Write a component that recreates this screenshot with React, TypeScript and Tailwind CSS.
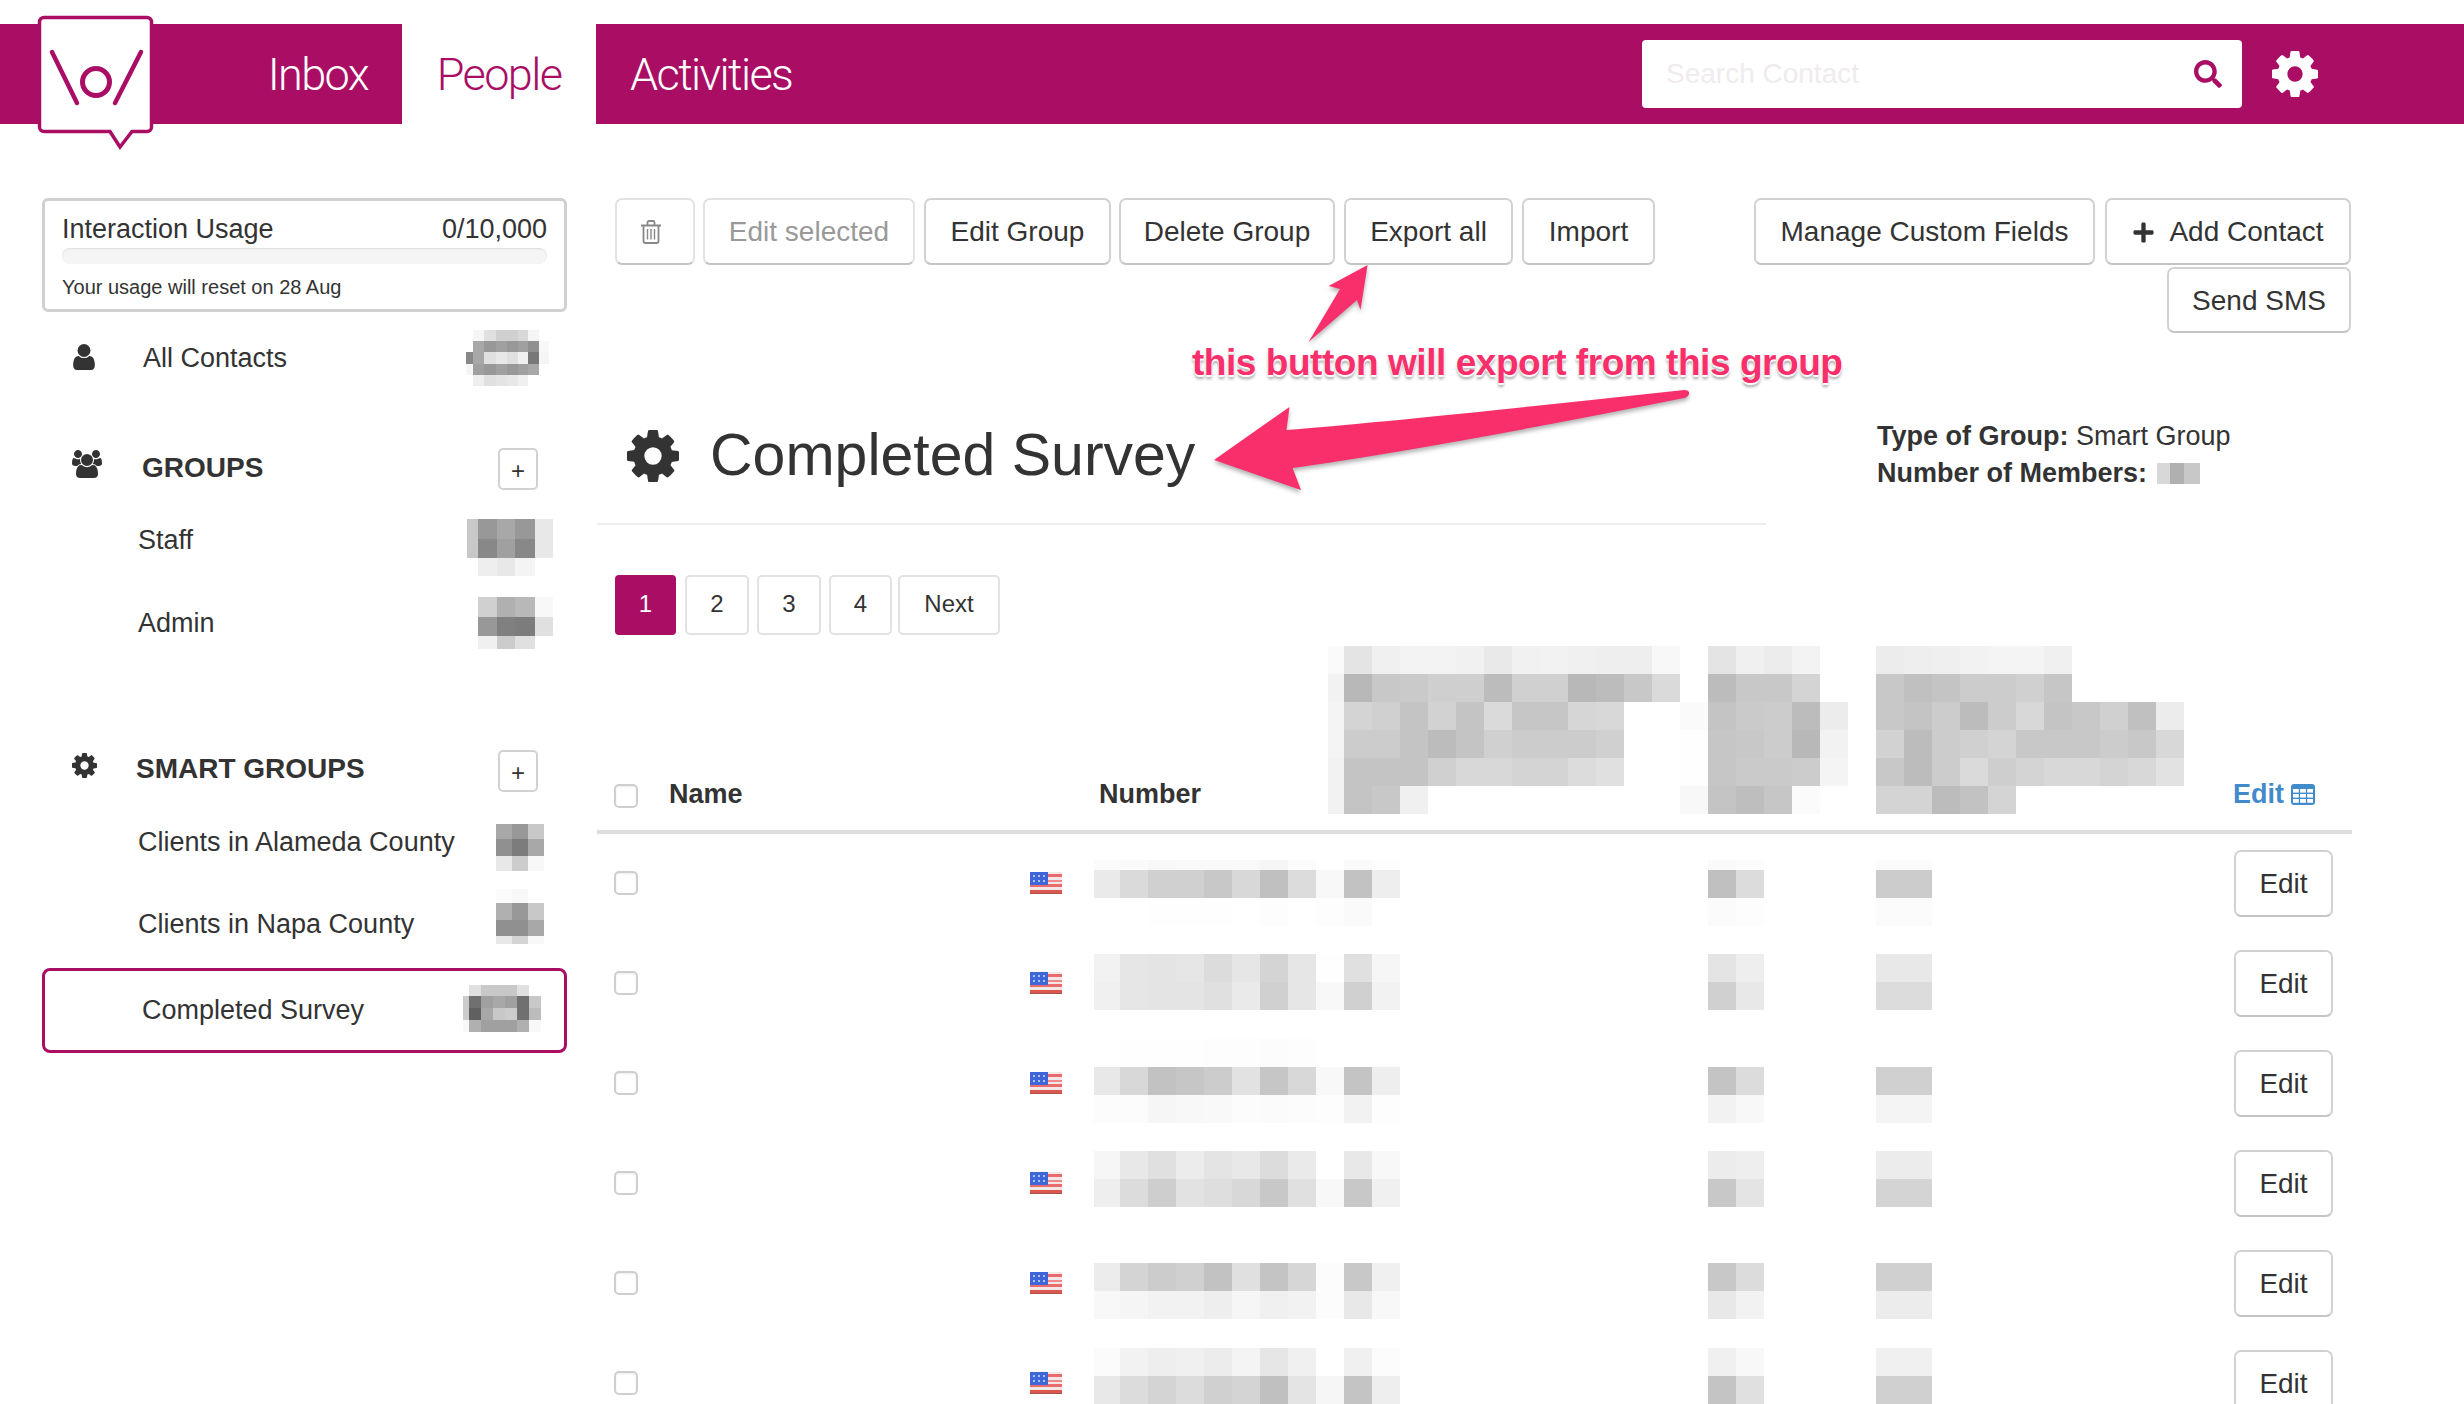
import React from "react";
import { FaSearch, FaPlus } from "react-icons/fa";

const Cog = ({ className = "" }: { className?: string }) => (
  <svg viewBox="128 128 1536 1536" fill="currentColor" className={className}>
    <path d="M1152 896q0-106-75-181t-181-75-181 75-75 181 75 181 181 75 181-75 75-181zm512-109v222q0 12-8 23t-20 13l-185 28q-19 54-39 91 35 50 107 138 10 12 10 25t-9 23q-27 37-99 108t-94 71q-12 0-26-9l-138-108q-44 23-91 38-16 136-29 186-7 28-36 28h-222q-14 0-24.500-8.500t-11.500-21.500l-28-184q-49-16-90-37l-141 107q-10 9-25 9-14 0-25-11-126-114-165-168-7-10-7-23 0-12 8-23 15-21 51-66.500t54-70.500q-27-50-41-99l-183-27q-13-2-21-12.500t-8-23.500v-222q0-12 8-23t19-13l186-28q14-46 39-92-40-57-107-138-10-12-10-24 0-10 9-23 26-36 98.500-107.500t94.500-71.500q13 0 26 10l138 107q44-23 91-38 16-136 29-186 7-28 36-28h222q14 0 24.500 8.500t11.500 21.500l28 184q49 16 90 37l142-107q9-9 24-9 13 0 25 10 129 119 165 170 7 8 7 22 0 12-8 23-15 21-51 66.500t-54 70.500q26 50 41 98l183 28q13 2 21 12.500t8 23.500z" />
  </svg>
);

const UserIcon = ({ className = "" }: { className?: string }) => (
  <svg viewBox="256 128 1280 1536" fill="currentColor" className={className}>
    <path d="M1536 1399q0 109-62.500 187t-150.500 78h-854q-88 0-150.500-78t-62.500-187q0-85 8.500-160.500t31.500-152 58.500-131 94-89 134.500-34.500q131 128 313 128t313-128q76 0 134.500 34.500t94 89 58.500 131 31.500 152 8.500 160.500zm-256-887q0 159-112.500 271.500t-271.500 112.500-271.500-112.500-112.500-271.500 112.500-271.500 271.500-112.500 271.500 112.500 112.500 271.500z" />
  </svg>
);

const UsersIcon = ({ className = "" }: { className?: string }) => (
  <svg viewBox="0 0 1920 1792" fill="currentColor" className={className}>
    <path d="M593 896q-162 5-265 128h-134q-82 0-138-40.500t-56-118.500q0-353 124-353 6 0 43.500 21t97.500 42.500 119 21.500q67 0 133-23-5 37-5 66 0 139 81 256zm1071 637q0 120-73 189.500t-194 69.500h-874q-121 0-194-69.500t-73-189.500q0-53 3.500-103.500t14-109 26.500-108.500 43-97.500 62-81 85.500-53.500 111.500-20q10 0 43 21.500t73 48 107 48 135 21.500 135-21.500 107-48 73-48 43-21.500q61 0 111.500 20t85.500 53.500 62 81 43 97.500 26.500 108.500 14 109 3.500 103.500zm-1024-1277q0 106-75 181t-181 75-181-75-75-181 75-181 181-75 181 75 75 181zm704 384q0 159-112.500 271.500t-271.500 112.500-271.500-112.500-112.500-271.500 112.500-271.500 271.500-112.500 271.500 112.500 112.500 271.500zm576 225q0 78-56 118.500t-138 40.500h-134q-103-123-265-128 81-117 81-256 0-29-5-66 66 23 133 23 59 0 119-21.500t97.500-42.500 43.500-21q124 0 124 353zm-128-609q0 106-75 181t-181 75-181-75-75-181 75-181 181-75 181 75 75 181z" />
  </svg>
);

const TableIcon = () => (
  <svg width="24" height="21" viewBox="0 0 24 21" className="ml-[7px] block shrink-0">
    <rect width="24" height="21" rx="3" fill="#428bca" />
    <g fill="#fff">
      <rect x="2" y="5" width="5.8" height="3.6" />
      <rect x="9.1" y="5" width="5.8" height="3.6" />
      <rect x="16.2" y="5" width="5.8" height="3.6" />
      <rect x="2" y="10" width="5.8" height="3.6" />
      <rect x="9.1" y="10" width="5.8" height="3.6" />
      <rect x="16.2" y="10" width="5.8" height="3.6" />
      <rect x="2" y="15" width="5.8" height="3.8" />
      <rect x="9.1" y="15" width="5.8" height="3.8" />
      <rect x="16.2" y="15" width="5.8" height="3.8" />
    </g>
  </svg>
);

const Mosaic = ({ x, y, rows, height, className = "" }: { x: number[]; y: number[]; rows: string[]; height?: number; className?: string }) => {
  const w = x[x.length - 1] - x[0];
  const y0 = height ? 0 : y[0];
  const h = height ?? y[y.length - 1] - y[0];
  return (
    <svg width={w} height={h} viewBox={`${x[0]} ${y0} ${w} ${h}`} shapeRendering="crispEdges" className={`block shrink-0 ${className}`}>
      {rows.map((r, ri) =>
        r.split(" ").map((c, ci) =>
          c === "ff" ? null : <rect key={`${ri}-${ci}`} x={x[ci]} y={y[ri]} width={x[ci + 1] - x[ci]} height={y[ri + 1] - y[ri]} fill={`#${c}${c}${c}`} />
        )
      )}
    </svg>
  );
};

const btn = "flex items-center justify-center rounded-[7px] border-2 border-[#d2d2d2] border-b-[#c4c4c4] bg-white pt-[1px] text-[28px] leading-none text-[#333]";

const Flag = () => (
  <svg width="32" height="22" viewBox="0 0 32 22" className="block shrink-0" shapeRendering="crispEdges">
    <rect width="32" height="22" fill="#f3e6e6" />
    <rect y="2" width="32" height="3" fill="#ea6b6b" />
    <rect y="8" width="32" height="2" fill="#ee8a8a" />
    <rect y="12" width="32" height="3" fill="#ea6b6b" />
    <rect y="18" width="32" height="4" fill="#d9574f" />
    <rect y="21" width="32" height="1" fill="#a9544a" />
    <rect width="18" height="13" fill="#3f66d8" />
    <rect x="3" y="3" width="2" height="2" fill="#a9c3f5" />
    <rect x="8" y="3" width="2" height="2" fill="#a9c3f5" />
    <rect x="13" y="3" width="2" height="2" fill="#a9c3f5" />
    <rect x="3" y="8" width="2" height="2" fill="#a9c3f5" />
    <rect x="8" y="8" width="2" height="2" fill="#a9c3f5" />
    <rect x="13" y="8" width="2" height="2" fill="#a9c3f5" />
  </svg>
);

const Check = ({ className = "" }: { className?: string }) => (
  <div className={`h-[24px] w-[24px] shrink-0 rounded-[5px] border-2 border-[#cfcfcf] bg-white shadow-[inset_0_1px_2px_rgba(0,0,0,0.08)] ${className}`} />
);

const PlusBox = ({ className = "" }: { className?: string }) => (
  <div className={`ml-auto mr-[29px] flex h-[42px] w-[40px] shrink-0 items-center justify-center rounded-[5px] border-2 border-[#d2d2d2] bg-white pt-[3px] text-[24px] leading-none text-[#333] ${className}`}>+</div>
);

const numX = [1094, 1120, 1148, 1176, 1204, 1232, 1260, 1288, 1316, 1344, 1372, 1400, 1708, 1736, 1764, 1876, 1904, 1932];
const dataRows: { y: number[]; rows: string[] }[] = [
  { y: [26, 36, 64, 92], rows: [
    "fb fa f8 f9 f9 f9 f5 fb ff fa fd ff fa fb ff fb fb",
    "ea da d0 d0 c8 d8 c0 dc f8 c2 ee ff c0 dc ff cc cc",
    "ff ff fe fe fe ff fd ff fd fa ff ff fb fd ff fb fb",
  ] },
  { y: [20, 48, 76], rows: [
    "f2 e6 e4 e6 dc e6 d4 e6 fe e0 f6 ff e4 ee ff e8 e8",
    "f0 e6 e4 e4 e0 ea d0 e6 f8 d0 f2 ff d0 e8 ff dc dc",
  ] },
  { y: [5, 33, 61, 89], rows: [
    "ff fe fe fe fd fd fc fd ff ff ff ff ff ff ff ff ff",
    "e8 d8 c2 c6 cc e2 c6 d8 f8 c4 ee ff c4 dc ff d0 d0",
    "fc fc f6 f8 f9 fc fb fc fd f2 fd ff f2 f8 ff f4 f4",
  ] },
  { y: [17, 45, 73], rows: [
    "f6 e8 e0 ec e4 e8 dc ea ff e8 f8 ff ec ee ff ec ec",
    "ee dc ce e2 de d8 c8 e0 f8 c8 f0 ff c8 e4 ff d4 d4",
  ] },
  { y: [29, 57, 85], rows: [
    "ec d4 cc d0 c2 e0 c4 d6 fc c8 f0 ff c8 dc ff d0 d0",
    "f8 f5 f2 f2 ee f6 f0 f2 fc e8 f8 ff e8 f2 ff ec ec",
  ] },
  { y: [14, 42, 70], rows: [
    "fb f2 ee f0 ec f4 e6 f0 ff f0 fc ff f0 f8 ff f0 f0",
    "e8 dc d4 dc d0 d4 c0 e4 f6 c4 ee ff c4 e0 ff d0 d0",
  ] },
];

const headX = [1328, 1344, 1372, 1400, 1428, 1456, 1484, 1512, 1540, 1568, 1596, 1624, 1652, 1680, 1708, 1736, 1764, 1792, 1820, 1848, 1876, 1904, 1932, 1960, 1988, 2016, 2044, 2072, 2100, 2128, 2156, 2184];
const headY = [646, 674, 702, 730, 758, 786, 814];
const headRows = [
  "fa e4 f0 f3 f3 f1 e9 f1 f2 f0 ee ee f8 ff e4 f0 ec f3 ff ff ec ee ef f2 f4 f4 f0 ff ff ff ff",
  "f2 b8 c8 ca cf cf bc d0 d0 b8 bc c8 da ff bc c8 c8 d4 ff ff c8 c0 c4 cc cc d0 c6 ff ff ff ff",
  "f4 d4 d0 c4 d2 c4 da c6 c6 d6 d8 ff ff fa c4 ca cc bc ec ff c8 c4 cc bc cc d8 c4 c8 d0 c0 ec",
  "f4 cc cc c4 bc c4 d0 cc cc cc d0 ff ff fe c6 c8 cc b8 f2 ff d2 bc cc d0 d4 c8 c8 c8 cc c8 d8",
  "f2 c4 c4 c4 d0 d8 d8 d4 d4 dc e0 ff ff fe c6 ca ca cc f4 ff c8 bc cc da ce d4 d8 d8 d4 d8 e2",
  "f2 c4 c8 f0 ff ff ff ff ff ff ff ff ff f8 c4 be c6 fb ff ff d4 d4 bc c2 d4 ff ff ff ff ff ff",
];

export default function App() {
  return (
    <div className="relative h-[1404px] w-[2464px] overflow-hidden bg-white font-['Liberation_Sans',Arial,sans-serif] text-[#333]">
      {/* Top bar */}
      <div className="pt-[24px]">
        <div className="flex h-[100px] items-stretch bg-[#a90e64]">
          <div className="flex w-[402px] items-center justify-end pr-[34px] pt-[1px] font-['Roboto',sans-serif] text-[45px] font-light tracking-[-1.6px] text-white">Inbox</div>
          <div className="flex w-[194px] items-center justify-center bg-white pt-[1px] font-['Roboto',sans-serif] text-[45px] font-light tracking-[-1.6px] text-[#a90e64]">People</div>
          <div className="flex items-center pl-[34px] pt-[1px] font-['Roboto',sans-serif] text-[45px] font-light tracking-[-1.6px] text-white">Activities</div>
          <div className="ml-auto flex items-center pr-[146px]">
            <div className="flex h-[68px] w-[600px] items-center justify-between rounded-[4px] bg-white pl-[24px] pr-[20px] text-[28px] text-[#f0ebee]">
              <span>Search Contact</span>
              <FaSearch className="h-[28px] w-[28px] text-[#a90e64]" />
            </div>
            <Cog className="ml-[30px] h-[46px] w-[46px] text-white" />
          </div>
        </div>
      </div>

      {/* Logo overlay */}
      <svg className="absolute left-[36px] top-[14px]" width="120" height="138" viewBox="36 14 120 138" fill="none">
        <path d="M44 17.5 H147 a4.5 4.5 0 0 1 4.500 4.500 V127 a4.500 4.500 0 0 1 -4.500 4.500 H132 L120 147 L110 131.500 H44 a4.500 4.500 0 0 1 -4.500 -4.500 V22 a4.500 4.500 0 0 1 4.500 -4.500 Z" fill="#fff" stroke="#a90e64" strokeWidth="3.5" />
        <path d="M52 52 L77 103 M141 52 L115 103" stroke="#a90e64" strokeWidth="4.5" strokeLinecap="round" />
        <circle cx="96" cy="82" r="13.5" stroke="#a90e64" strokeWidth="5" />
      </svg>

      <div className="flex pt-[74px]">
        {/* Sidebar */}
        <div className="ml-[42px] w-[525px] shrink-0 text-[27px]">
          <div className="h-[114px] rounded-[6px] border-[3px] border-[#d0d0d0] px-[17px] pt-[12px]">
            <div className="flex justify-between text-[27px] leading-[32px]">
              <span>Interaction Usage</span>
              <span>0/10,000</span>
            </div>
            <div className="mt-[3px] h-[16px] rounded-[8px] bg-[#f5f5f5] shadow-[inset_0_1px_2px_rgba(0,0,0,0.1)]" />
            <div className="mt-[10px] text-[20px] leading-[26px]">Your usage will reset on 28 Aug</div>
          </div>

          <div className="flex h-[92px] items-center pl-[30px]">
            <UserIcon className="mb-[2px] h-[26px] w-[24px] shrink-0 text-[#333]" />
            <span className="ml-[47px]">All Contacts</span>
            <Mosaic
              className="ml-auto mr-[18px]"
              x={[466, 473, 484, 496, 507, 518, 528, 539, 549]}
              y={[331, 342, 353, 365, 376, 387]}
              rows={[
                "ff f5 e0 d0 d0 d8 f5 ff",
                "ff a8 98 a0 98 a0 90 f8",
                "88 a8 e0 e8 e0 f0 78 f5",
                "f5 a0 98 a0 98 a0 a8 ff",
                "ff ee e0 e4 e8 f0 ff ff",
              ]}
            />
          </div>

          <div className="mt-[36px] flex h-[55px] items-center pl-[30px]">
            <UsersIcon className="mb-[8px] h-[28px] w-[30px] shrink-0 text-[#333]" />
            <span className="ml-[40px] text-[28px] font-bold">GROUPS</span>
            <PlusBox className="mt-[3px]" />
          </div>

          <div className="flex h-[90px] items-center pl-[96px]">
            <span>Staff</span>
            <Mosaic className="ml-auto mr-[14px] mt-[15px]" x={[467, 478, 497, 515, 535, 553]} y={[519, 539, 558, 576]} rows={["c8 98 a8 98 e8", "c8 88 a0 88 e8", "ff ee e8 f4 ff"]} />
          </div>
          <div className="flex h-[76px] items-center pl-[96px]">
            <span>Admin</span>
            <Mosaic className="ml-auto mr-[14px]" x={[478, 497, 515, 535, 553]} y={[596, 616, 635, 648]} rows={["d0 b0 b8 f8", "98 80 7c e0", "f0 cc e0 ff"]} />
          </div>

          <div className="mt-[81px] flex h-[54px] items-center pl-[30px]">
            <Cog className="mb-[8px] h-[25px] w-[25px] shrink-0 text-[#333]" />
            <span className="ml-[39px] text-[28px] font-bold">SMART GROUPS</span>
            <PlusBox className="mt-[4px]" />
          </div>

          <div className="flex h-[92px] items-center pl-[96px]">
            <span>Clients in Alameda County</span>
            <Mosaic className="ml-auto mr-[23px] mt-[11px]" x={[496, 512, 528, 544]} y={[824, 839, 856, 871]} rows={["a8 98 c8", "90 7c a8", "e8 cc f8"]} />
          </div>
          <div className="flex h-[72px] items-center pl-[96px]">
            <span>Clients in Napa County</span>
            <Mosaic className="ml-auto mr-[23px] mb-[16px]" x={[496, 512, 528, 544]} y={[889, 903, 920, 936, 944]} rows={["fb f8 ff", "b0 98 c8", "90 90 a8", "e8 d4 f8"]} />
          </div>
          <div className="mt-[8px] flex h-[85px] items-center rounded-[8px] border-[3px] border-[#a90e64] pl-[97px]">
            <span>Completed Survey</span>
            <Mosaic
              className="ml-auto mr-[23px] mb-[5px]"
              x={[463, 469, 481, 493, 505, 517, 529, 541]}
              y={[984, 995, 1007, 1019, 1031]}
              rows={["ff e0 c8 c8 c8 e0 ff", "cc 70 a0 a8 a0 70 c8", "cc 60 a8 c8 cc 70 bc", "f8 b0 a0 a0 a0 b0 f8"]}
            />
          </div>
        </div>

        {/* Main */}
        <div className="ml-[30px] w-[1755px] shrink-0">
          {/* Toolbar */}
          <div className="h-[135px] pl-[18px]">
            <div className="flex h-[67px]">
              <div className={`${btn} w-[80px] border-[#e2e2e2] pr-[9px]`}>
                <svg width="22" height="24" viewBox="0 0 22 24" fill="none" stroke="#888" strokeWidth="1.8">
                  <path d="M1 5.500 H21 M3.500 5.500 V21 a2 2 0 0 0 2 2 H16.500 a2 2 0 0 0 2 -2 V5.500 M7.500 5 V2.500 a1.500 1.500 0 0 1 1.500 -1.500 H13 a1.500 1.500 0 0 1 1.500 1.500 V5" />
                  <path d="M7.500 9 V19.500 M11 9 V19.500 M14.500 9 V19.500" strokeWidth="1.4" />
                </svg>
              </div>
              <div className={`${btn} ml-[8px] w-[212px] border-[#e2e2e2] text-[#999]`}>Edit selected</div>
              <div className={`${btn} ml-[9px] w-[187px]`}>Edit Group</div>
              <div className={`${btn} ml-[8px] w-[216px]`}>Delete Group</div>
              <div className={`${btn} ml-[9px] w-[169px]`}>Export all</div>
              <div className={`${btn} ml-[9px] w-[133px]`}>Import</div>
              <div className={`${btn} ml-auto w-[341px]`}>Manage Custom Fields</div>
              <div className={`${btn} ml-[10px] mr-[1px] w-[246px]`}>
                <FaPlus className="mr-[14px] h-[23px] w-[23px]" />
                Add Contact
              </div>
            </div>
            <div className="mt-[2px] flex justify-end pr-[1px]">
              <div className={`${btn} h-[66px] w-[184px]`}>Send SMS</div>
            </div>
          </div>

          {/* Heading */}
          <div className="flex h-[192px]">
            <div className="flex h-[192px] w-[1169px] shrink-0 items-start border-b-2 border-[#eeeeee] pl-[30px] pt-[87px]">
              <Cog className="mt-[10px] h-[52px] w-[52px] shrink-0 text-[#333]" />
              <div className="ml-[31px] text-[59px] leading-[70px]">Completed Survey</div>
            </div>
            <div className="ml-[111px] pt-[85px] text-[27px] leading-[37px]">
              <div>
                <b>Type of Group:</b> Smart Group
              </div>
              <div className="flex items-center">
                <b>Number of Members:</b>
                <Mosaic className="ml-[10px]" x={[2157, 2170, 2184, 2200]} y={[465, 486]} rows={["d8 b0 c8"]} />
              </div>
            </div>
          </div>

          {/* Pagination */}
          <div className="mt-[50px] flex h-[60px] pl-[18px] text-[24px]">
            <div className="flex w-[61px] items-center justify-center rounded-[4px] bg-[#a90e64] pb-[2px] text-white">1</div>
            {[
              ["2", "ml-[9px] w-[64px]"],
              ["3", "ml-[8px] w-[64px]"],
              ["4", "ml-[8px] w-[63px]"],
              ["Next", "ml-[6px] w-[102px]"],
            ].map(([t, c]) => (
              <div key={t} className={`flex items-center justify-center rounded-[5px] border-2 border-[#e2e2e2] pb-[2px] ${c}`}>{t}</div>
            ))}
          </div>

          {/* Table header */}
          <div className="mt-[11px] flex h-[188px] items-end border-b-4 border-[#dddddd]">
            <Check className="mb-[22px] ml-[17px]" />
            <div className="mb-[19px] ml-[31px] w-[430px] shrink-0 text-[27px] font-bold leading-[34px]">Name</div>
            <div className="mb-[19px] w-[229px] shrink-0 text-[27px] font-bold leading-[34px]">Number</div>
            <Mosaic className="mb-[16px]" x={headX} y={headY} rows={headRows} />
            <div className="mb-[19px] ml-[49px] flex items-center text-[27px] font-bold leading-[34px] text-[#428bca]">
              Edit
              <TableIcon />
            </div>
          </div>

          {/* Rows */}
          <div className="-mt-[1px]">
            {dataRows.map((r, i) => (
              <div key={i} className="flex h-[100px] items-center">
                <Check className="ml-[17px]" />
                <div className="ml-[392px]">
                  <Flag />
                </div>
                <Mosaic className="ml-[32px] mt-[2px]" x={numX} y={r.y} rows={r.rows} height={100} />
                <div className={`${btn} ml-[302px] h-[67px] w-[99px]`}>Edit</div>
              </div>
            ))}
          </div>
        </div>
      </div>

      {/* Annotation overlay */}
      <div className="absolute left-[1192px] top-[338px] whitespace-nowrap text-[37px] font-bold leading-[50px] tracking-[-0.45px] text-[#f92f6b] [text-shadow:0_0_2px_#fff,0_2px_1px_#fff,0_4px_3px_rgba(0,0,0,0.35)]">
        this button will export from this group
      </div>
      <svg className="absolute left-[1200px] top-[260px] drop-shadow-[0_3px_2px_rgba(0,0,0,0.3)]" width="500" height="240" viewBox="1200 260 500 240" fill="#f92f6b">
        <path d="M1367.6 265 L1328.6 286 L1340 289 L1308.6 342 L1357 300 L1360.5 310 Z" />
        <path d="M1214 460 L1289.5 407 L1286.5 430 Q1400 421 1684 390 Q1690 390 1689 394 Q1688 397 1684 398 Q1440 447 1292.6 468 L1301 490 Z" />
      </svg>
    </div>
  );
}
